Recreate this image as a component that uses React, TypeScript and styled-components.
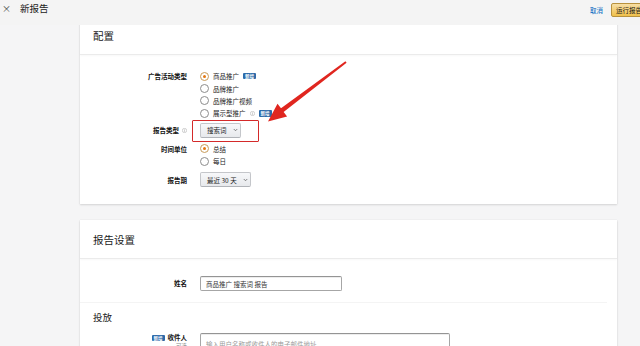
import React from "react";
import styled, { createGlobalStyle, css } from "styled-components";

const Global = createGlobalStyle`
  html, body {
    margin: 0;
    padding: 0;
    width: 640px;
    height: 346px;
    overflow: hidden;
    background: #f5f5f6;
    font-family: "Noto Sans CJK SC", "Noto Sans", "Liberation Sans", sans-serif;
    color: #111;
  }
  * { box-sizing: border-box; }
`;

const Page = styled.div`
  position: relative;
  width: 640px;
  height: 346px;
  overflow: hidden;
`;

const TopBar = styled.header`
  position: relative;
  z-index: 2;
  height: 25px;
  display: flex;
  align-items: flex-start;
  justify-content: space-between;
  padding: 2px 0 0 2px;
  background: #f4f4f4;
`;

const TitleGroup = styled.div`
  display: flex;
  align-items: center;
  gap: 9px;
  height: 13px;
`;

const Close = styled.span`
  font-size: 9px;
  line-height: 13px;
  color: #444;
`;

const Title = styled.h1`
  margin: 0;
  font-size: 9.5px;
  font-weight: 400;
  line-height: 13px;
  color: #222;
`;

const Actions = styled.div`
  display: flex;
  align-items: center;
  gap: 8px;
  margin-right: -22px;
  padding-top: 1px;
`;

const CancelLink = styled.a`
  font-size: 6.5px;
  color: #0066c0;
  line-height: 14px;
`;

const RunButton = styled.button`
  height: 14px;
  width: 51px;
  padding: 0 4px;
  border: 1px solid #b8923e;
  border-radius: 2px;
  background: linear-gradient(#f7dfa5, #f0c14b);
  font-family: inherit;
  font-size: 6.5px;
  line-height: 12px;
  color: #111;
  text-align: left;
`;

const Main = styled.main`
  height: 321px;
  overflow: hidden;
  padding: 0 23px 0 80px;
`;

const ScrollContent = styled.div`
  margin-top: -9px;
  display: flex;
  flex-direction: column;
  gap: 16px;
`;

const Card = styled.section`
  width: 537px;
  background: #fff;
  box-shadow: 0 1px 2px rgba(0, 0, 0, 0.13), 0 0 1px rgba(0, 0, 0, 0.1);
`;

const CardHeader = styled.h2`
  margin: 0;
  height: 39px;
  display: flex;
  align-items: center;
  padding-left: 13px;
  font-size: 10.5px;
  font-weight: 400;
  color: #1a1a1a;
  border-bottom: 1px solid #ebebeb;
  box-shadow: 0 1px 2px rgba(0, 0, 0, 0.03);
`;

const CardBody = styled.div<{ $pt: number; $pb: number }>`
  display: flex;
  flex-direction: column;
  padding: ${(p) => p.$pt}px 0 ${(p) => p.$pb}px 0;
`;

const FormRow = styled.div<{ $mt?: number; $center?: boolean }>`
  display: grid;
  grid-template-columns: 107px 1fr;
  column-gap: 13px;
  margin-top: ${(p) => p.$mt ?? 0}px;
  align-items: ${(p) => (p.$center ? "center" : "start")};
`;

const Label = styled.div<{ $lh?: number }>`
  display: flex;
  justify-content: flex-end;
  align-items: center;
  gap: 3px;
  font-size: 6.5px;
  font-weight: 700;
  line-height: ${(p) => p.$lh ?? 12.4}px;
  color: #111;
  white-space: nowrap;
`;

const LabelStack = styled.div`
  display: flex;
  flex-direction: column;
  align-items: flex-end;
`;

const SubNote = styled.span`
  font-size: 5.5px;
  line-height: 8px;
  color: #888;
`;

const RadioList = styled.div`
  display: flex;
  flex-direction: column;
`;

const RadioItem = styled.label`
  display: flex;
  align-items: center;
  gap: 4px;
  height: 12.4px;
  font-size: 6.5px;
  color: #222;
  white-space: nowrap;
`;

const RadioCircle = styled.span<{ $checked?: boolean }>`
  position: relative;
  width: 9px;
  height: 9px;
  border-radius: 50%;
  border: 1px solid ${(p) => (p.$checked ? "#c89b5a" : "#8d8d8d")};
  background: #fff;
  flex: none;
  ${(p) =>
    p.$checked &&
    css`
      &::after {
        content: "";
        position: absolute;
        left: 2px;
        top: 2px;
        width: 3px;
        height: 3px;
        border-radius: 50%;
        background: #e47911;
      }
    `}
`;

const Badge = styled.span`
  display: inline-flex;
  align-items: center;
  justify-content: center;
  width: 13px;
  height: 6.5px;
  background: #2d6aa8;
  color: #fff;
  font-size: 4.5px;
  font-weight: 700;
  border-radius: 1px;
  line-height: 1;
`;

const Highlight = styled.div`
  position: relative;
  justify-self: start;
  padding: 3px 0 4px 0;
  &::before {
    content: "";
    position: absolute;
    top: 0;
    bottom: 0;
    left: -8px;
    right: -18px;
    border: 1.5px solid #d42a2a;
    border-radius: 1px;
  }
`;

const Dropdown = styled.button<{ $w: number }>`
  display: flex;
  align-items: center;
  gap: 6px;
  width: ${(p) => p.$w}px;
  height: 15px;
  padding: 0 0 0 6px;
  border: 1px solid #c4c6ca;
  border-bottom-color: #b0b3b8;
  border-radius: 2px;
  background: linear-gradient(#f7f8fa, #e7e9ec);
  font-family: inherit;
  font-size: 6.5px;
  color: #222;
  white-space: nowrap;
`;

const TextInput = styled.div<{ $w: number; $h: number; $placeholder?: boolean }>`
  width: ${(p) => p.$w}px;
  height: ${(p) => p.$h}px;
  padding: 0 5px;
  display: flex;
  align-items: ${(p) => (p.$placeholder ? "flex-start" : "center")};
  padding-top: ${(p) => (p.$placeholder ? 6 : 0)}px;
  border: 1px solid #a6a6a6;
  border-top-color: #949494;
  border-radius: 2px;
  box-shadow: 0 1px 0 rgba(255, 255, 255, 0.5), inset 0 1px 0 rgba(0, 0, 0, 0.07);
  font-size: 6.5px;
  line-height: 8px;
  color: ${(p) => (p.$placeholder ? "#9a9a9a" : "#333")};
  white-space: nowrap;
`;

const SectionTitle = styled.h3`
  margin: 0;
  padding-left: 13px;
  font-size: 9.5px;
  font-weight: 400;
  line-height: 14px;
  color: #1a1a1a;
`;

const Divider = styled.hr`
  margin: 0;
  width: 527px;
  border: none;
  border-top: 1px solid #f4f4f4;
`;

const ArrowLayer = styled.svg`
  position: absolute;
  left: 0;
  top: 0;
  width: 640px;
  height: 346px;
  pointer-events: none;
  z-index: 3;
`;

const InfoIcon = () => (
  <svg width="5" height="5" viewBox="0 0 10 10" style={{ flex: "none" }}>
    <circle cx="5" cy="5" r="4.3" fill="none" stroke="#aaa" strokeWidth="1.1" />
    <rect x="4.4" y="4.2" width="1.2" height="3.4" fill="#aaa" />
    <rect x="4.4" y="2.4" width="1.2" height="1.2" fill="#aaa" />
  </svg>
);

const Chevron = () => (
  <svg width="5" height="4" viewBox="0 0 10 8" style={{ flex: "none" }}>
    <polyline points="1.5,2 5,5.5 8.5,2" fill="none" stroke="#555" strokeWidth="1.4" />
  </svg>
);

const campaignTypes: { text: string; checked?: boolean; badge?: boolean; info?: boolean }[] = [
  { text: "商品推广", checked: true, badge: true },
  { text: "品牌推广" },
  { text: "品牌推广视频" },
  { text: "展示型推广", info: true, badge: true },
];

export default function App() {
  return (
    <>
      <Global />
      <Page>
        <TopBar>
          <TitleGroup>
            <Close>×</Close>
            <Title>新报告</Title>
          </TitleGroup>
          <Actions>
            <CancelLink>取消</CancelLink>
            <RunButton>运行报告</RunButton>
          </Actions>
        </TopBar>
        <Main>
          <ScrollContent>
            <Card>
              <CardHeader>配置</CardHeader>
              <CardBody $pt={15} $pb={17}>
                <FormRow>
                  <Label>广告活动类型</Label>
                  <RadioList>
                    {campaignTypes.map((t) => (
                      <RadioItem key={t.text}>
                        <RadioCircle $checked={t.checked} />
                        {t.text}
                        {t.info && <InfoIcon />}
                        {t.badge && <Badge>新增</Badge>}
                      </RadioItem>
                    ))}
                  </RadioList>
                </FormRow>
                <FormRow $center>
                  <Label $lh={15}>
                    报告类型 <InfoIcon />
                  </Label>
                  <Highlight>
                    <Dropdown $w={41}>
                      搜索词 <Chevron />
                    </Dropdown>
                  </Highlight>
                </FormRow>
                <FormRow $mt={1}>
                  <Label>时间单位</Label>
                  <RadioList>
                    <RadioItem>
                      <RadioCircle $checked />
                      总结
                    </RadioItem>
                    <RadioItem>
                      <RadioCircle />
                      每日
                    </RadioItem>
                  </RadioList>
                </FormRow>
                <FormRow $mt={5} $center>
                  <Label $lh={10}>报告期</Label>
                  <Dropdown $w={51}>
                    最近 30 天 <Chevron />
                  </Dropdown>
                </FormRow>
              </CardBody>
            </Card>
            <Card>
              <CardHeader>报告设置</CardHeader>
              <CardBody $pt={17} $pb={20}>
                <FormRow $center>
                  <Label $lh={11}>姓名</Label>
                  <TextInput $w={142} $h={15}>
                    商品推广 搜索词 报告
                  </TextInput>
                </FormRow>
                <Divider style={{ marginTop: 11 }} />
                <div style={{ marginTop: 7 }}>
                  <SectionTitle>投放</SectionTitle>
                </div>
                <FormRow $mt={9}>
                  <LabelStack>
                    <Label $lh={9}>
                      <Badge>新增</Badge>
                      收件人
                    </Label>
                    <SubNote>可选</SubNote>
                  </LabelStack>
                  <TextInput $w={250} $h={30} $placeholder>
                    输入用户名称或收件人的电子邮件地址
                  </TextInput>
                </FormRow>
              </CardBody>
            </Card>
          </ScrollContent>
        </Main>
        <ArrowLayer viewBox="0 0 640 346">
          <polygon
            points="268,121.5 277.5,103.7 281,108.3 345.4,61.2 346.6,62.8 283.6,111.9 287.1,116.5"
            fill="#e0261f"
          />
        </ArrowLayer>
      </Page>
    </>
  );
}
